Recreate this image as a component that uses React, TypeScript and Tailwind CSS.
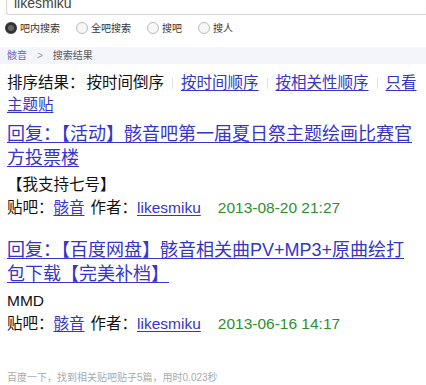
const FONT = `font-["Liberation_Sans","Noto_Sans_CJK_SC",sans-serif]`;

const RADIOS = [
  { label: "吧内搜索", checked: true },
  { label: "全吧搜索", checked: false },
  { label: "搜吧", checked: false },
  { label: "搜人", checked: false },
];

const POSTS = [
  {
    title: "回复：【活动】骸音吧第一届夏日祭主题绘画比赛官方投票楼",
    body: "【我支持七号】",
    bar: "骸音",
    author: "likesmiku",
    time: "2013-08-20 21:27",
  },
  {
    title: "回复：【百度网盘】骸音相关曲PV+MP3+原曲绘打包下载【完美补档】",
    body: "MMD",
    bar: "骸音",
    author: "likesmiku",
    time: "2013-06-16 14:17",
  },
];

function Sep() {
  return <span className="inline-block w-px h-[11px] bg-[#e2e2e2] mx-[8px] align-[-1px]" />;
}

export default function App() {
  return (
    <div className={`${FONT} w-[426px] h-[385px] bg-white overflow-hidden text-[#111]`}>
      <div className="pl-[6px]">
        <div className="mt-[-8px] h-[23px] border border-[#d6d6d6] border-r-0 rounded-bl-[3px] flex items-center pl-[7px] text-[14px] text-[#444] shadow-[inset_0_1px_2px_rgba(0,0,0,0.08)]">
          likesmiku
        </div>
      </div>

      <div className="flex items-center h-[20px] mt-[3px] pl-[5px] text-[10px] text-[#333]">
        {RADIOS.map((r) => (
          <label key={r.label} className="flex items-center mr-[16px]">
            {r.checked ? (
              <span className="w-[12px] h-[12px] rounded-full border-[3px] border-[#333] bg-[#666] mr-[3px]" />
            ) : (
              <span className="w-[12px] h-[12px] rounded-full border border-[#bbb] bg-[#f7f7f7] mr-[3px]" />
            )}
            {r.label}
          </label>
        ))}
      </div>

      <div className="mt-[9px] h-[17px] bg-[#f4f5fb] flex items-center pl-[7px] text-[10px] text-[#555]">
        <span className="text-[#6666cc]">骸音</span>
        <span className="mx-[10px] text-[#999]">&gt;</span>
        <span>搜索结果</span>
      </div>

      <div className="px-[7px]">
        <div className="mt-[8px] text-[15.5px] leading-[22px]">
          <span>排序结果：</span>
          <span className="ml-[2px]">按时间倒序</span>
          <Sep />
          <a className="text-[#3535c8] underline underline-offset-2">按时间顺序</a>
          <Sep />
          <a className="text-[#3535c8] underline underline-offset-2">按相关性顺序</a>
          <Sep />
          <a className="text-[#3535c8] underline underline-offset-2">只看主题贴</a>
        </div>

        {POSTS.map((p, i) => (
          <div key={i} className={i === 0 ? "mt-[6px]" : "mt-[19px]"}>
            <a className="block text-[18px] leading-[24px] text-[#3535c8] underline underline-offset-2">
              {p.title}
            </a>
            <div className="mt-[3px] text-[15.5px] leading-[23px]">{p.body}</div>
            <div className="text-[15.5px] leading-[23px] flex">
              <span>贴吧：</span>
              <a className="text-[#3535c8] underline underline-offset-2">{p.bar}</a>
              <span className="ml-[6px]">作者：</span>
              <a className="text-[#3535c8] underline underline-offset-2">{p.author}</a>
              <span className="ml-[17px] text-[#2f8f2f]">{p.time}</span>
            </div>
          </div>
        ))}

        <div className="mt-[35px] text-[10px] text-[#aaa]">百度一下，找到相关贴吧贴子5篇，用时0.023秒</div>
      </div>
    </div>
  );
}
